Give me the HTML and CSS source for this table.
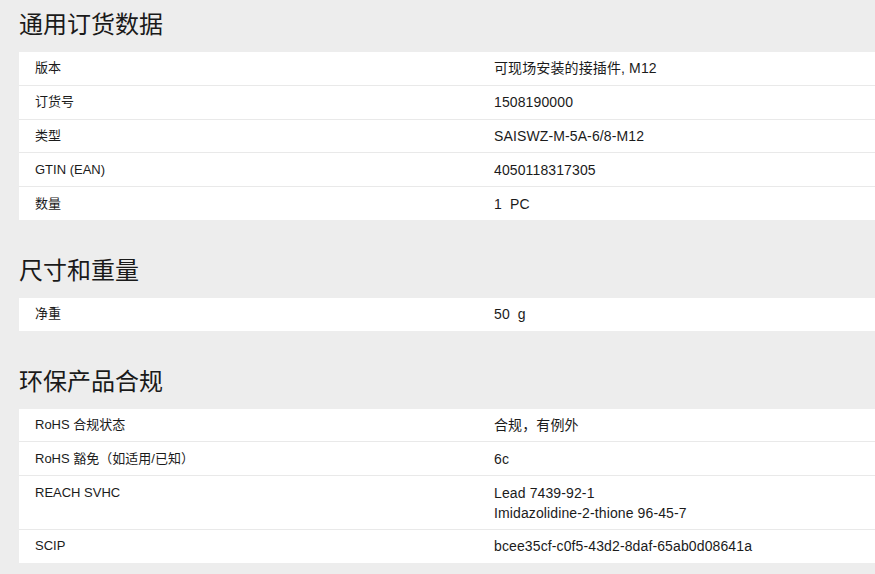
FILE: index.html
```html
<!DOCTYPE html>
<html lang="zh">
<head>
<meta charset="utf-8">
<title>通用订货数据</title>
<link rel="stylesheet" href="styles.css">
</head>
<body>
<div class="page">
  <section class="section">
    <h2 class="section-title">通用订货数据</h2>
    <div class="table">
      <div class="row"><div class="label">版本</div><div class="value">可现场安装的接插件, M12</div></div>
      <div class="row"><div class="label">订货号</div><div class="value">1508190000</div></div>
      <div class="row"><div class="label">类型</div><div class="value">SAISWZ-M-5A-6/8-M12</div></div>
      <div class="row"><div class="label">GTIN (EAN)</div><div class="value">4050118317305</div></div>
      <div class="row"><div class="label">数量</div><div class="value pre">1  PC</div></div>
    </div>
  </section>
  <section class="section">
    <h2 class="section-title">尺寸和重量</h2>
    <div class="table">
      <div class="row"><div class="label">净重</div><div class="value pre">50  g</div></div>
    </div>
  </section>
  <section class="section">
    <h2 class="section-title">环保产品合规</h2>
    <div class="table">
      <div class="row"><div class="label">RoHS 合规状态</div><div class="value">合规，有例外</div></div>
      <div class="row"><div class="label">RoHS 豁免（如适用/已知）</div><div class="value">6c</div></div>
      <div class="row"><div class="label">REACH SVHC</div><div class="value">Lead 7439-92-1<br>Imidazolidine-2-thione 96-45-7</div></div>
      <div class="row"><div class="label">SCIP</div><div class="value">bcee35cf-c0f5-43d2-8daf-65ab0d08641a</div></div>
    </div>
  </section>
</div>
</body>
</html>
```
FILE: styles.css
```css
html, body {
  margin: 0;
  padding: 0;
  background: #ededed;
}
body {
  font-family: "Liberation Sans", "Noto Sans CJK SC", Arial, sans-serif;
  color: #1b1b1b;
  font-size: 14px;
}
.page {
  padding-left: 19px;
}
.section + .section {
  margin-top: 26px;
}
.section-title {
  margin: 0 0 7px 0;
  font-family: "Noto Sans CJK SC", sans-serif;
  font-weight: 400;
  font-size: 24px;
  line-height: 45px;
  color: #1a1a1a;
}
.table {
  background: #ffffff;
}
.row {
  display: grid;
  grid-template-columns: 459px 1fr;
  padding: 6.4px 0 6.4px 16px;
  line-height: 20px;
  border-bottom: 1px solid #e9e9e9;
}
.row:last-child {
  border-bottom: none;
}
.label {
  font-size: 13px;
}
.value {
  font-size: 14px;
  letter-spacing: 0.12px;
}
.pre {
  white-space: pre;
}
```
